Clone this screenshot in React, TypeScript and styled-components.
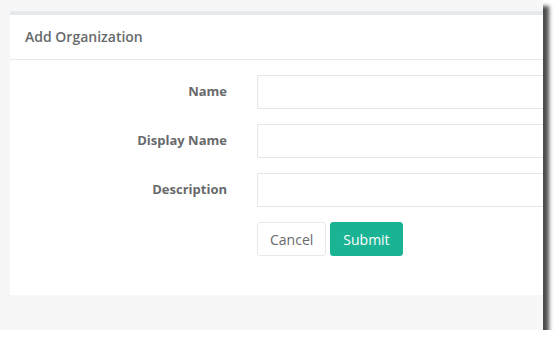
import React from "react";
import styled, { createGlobalStyle } from "styled-components";

const GlobalStyle = createGlobalStyle`
  html, body {
    margin: 0;
    padding: 0;
    background: #ffffff;
  }
  body {
    font-family: "Open Sans", "Liberation Sans", sans-serif;
    color: #676a6c;
  }
`;

const Shot = styled.div`
  width: 543px;
  height: 330px;
  background-color: #f7f7f7;
  overflow: hidden;
  box-shadow: 6px 6px 4px rgba(0, 0, 0, 0.7);
  padding: 11px 0 0 10px;
  box-sizing: border-box;
`;

const Panel = styled.section`
  width: 900px;
  background-color: #fff;
`;

const PanelTitle = styled.header`
  border-top: 4px solid #e7eaec;
  border-bottom: 1px solid #e7eaec;
  height: 42px;
  box-sizing: content-box;
  display: flex;
  align-items: center;
  padding: 0 15px 2px;
`;

const TitleText = styled.h5`
  margin: 0;
  font-size: 14px;
  font-weight: 600;
  color: #676a6c;
`;

const PanelBody = styled.form`
  padding: 15px 0 39px;
  display: grid;
  grid-template-columns: 217px 600px;
  column-gap: 30px;
  row-gap: 15px;
  align-items: center;
`;

const Label = styled.label`
  font-size: 13px;
  font-weight: 700;
  text-align: right;
  color: #676a6c;
  padding-bottom: 2px;
`;

const Input = styled.input`
  height: 34px;
  box-sizing: border-box;
  border: 1px solid #e5e6e7;
  border-radius: 1px;
  padding: 6px 12px;
  font-family: inherit;
  font-size: 14px;
  outline: none;
`;

const Actions = styled.div`
  grid-column: 2;
  display: flex;
  gap: 4px;
`;

const Button = styled.button<{ $primary?: boolean }>`
  height: 34px;
  box-sizing: border-box;
  padding: 6px 12px;
  border-radius: 3px;
  font-family: inherit;
  font-size: 14px;
  cursor: pointer;
  border: 1px solid ${(p) => (p.$primary ? "#1ab394" : "#e7eaec")};
  background-color: ${(p) => (p.$primary ? "#1ab394" : "#fff")};
  color: ${(p) => (p.$primary ? "#fff" : "#676a6c")};
`;

const fields = ["Name", "Display Name", "Description"];

export default function App() {
  return (
    <>
      <GlobalStyle />
      <Shot>
        <Panel>
          <PanelTitle>
            <TitleText>Add Organization</TitleText>
          </PanelTitle>
          <PanelBody onSubmit={(e) => e.preventDefault()}>
            {fields.map((f) => (
              <React.Fragment key={f}>
                <Label>{f}</Label>
                <Input type="text" />
              </React.Fragment>
            ))}
            <Actions>
              <Button type="button">Cancel</Button>
              <Button type="submit" $primary>
                Submit
              </Button>
            </Actions>
          </PanelBody>
        </Panel>
      </Shot>
    </>
  );
}
